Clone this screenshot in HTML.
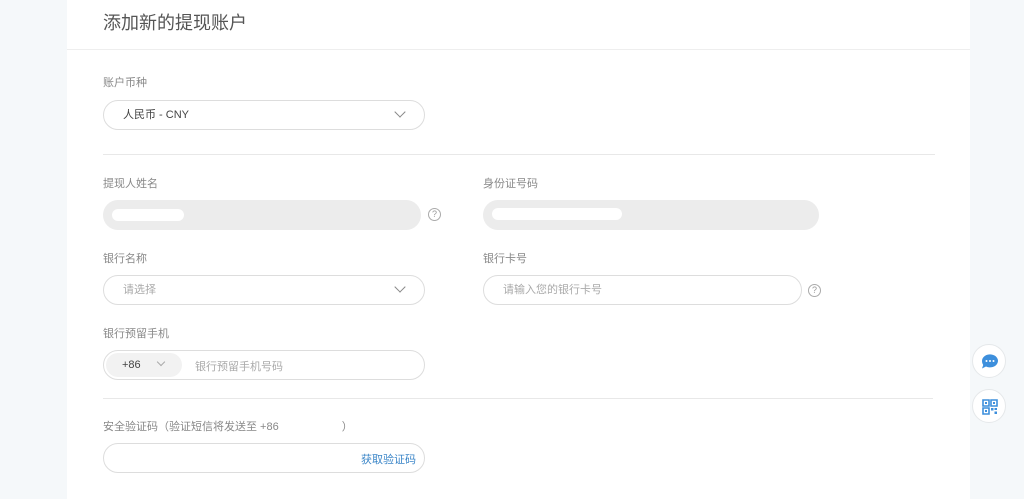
<!DOCTYPE html><html><head><meta charset="utf-8"><style>
*{margin:0;padding:0;box-sizing:border-box}
body{width:1024px;height:499px;background:#f5f8fa;font-family:"Liberation Sans","Noto Sans CJK SC",sans-serif;position:relative;overflow:hidden;color:#333}
.card{position:absolute;left:67px;top:0;width:903px;height:499px;background:#fff}
.a{position:absolute}
.t{font-size:18px;color:#555;left:103px;top:9px}
.lab{font-size:11px;color:#888}
.box{border:1px solid #ddd;border-radius:15px;height:30px;background:#fff;font-size:11px;line-height:28px}
.g{background:#ececec;border:none;border-radius:15px;height:30px}
.q{width:13px;height:13px;border:1px solid #aaa;border-radius:50%;font-size:9px;color:#999;text-align:center;line-height:11px}
.ph{color:#aaa}
.chev{position:absolute;right:20px;top:7px;width:8px;height:8px;border-right:1.3px solid #888;border-bottom:1.3px solid #888;transform:rotate(45deg)}
.hl{height:1px;background:#e8e8e8}
.btn{width:34px;height:34px;border-radius:50%;background:#fff;border:1px solid #e5e8ea;left:972px}
</style></head><body>
<div class="card"></div>
<div class="a t">添加新的提现账户</div>
<div class="a hl" style="left:67px;top:49px;width:903px;background:#eee"></div>
<div class="a lab" style="left:103px;top:74px">账户币种</div>
<div class="a box" style="left:103px;top:100px;width:322px;padding-left:19px;color:#444">人民币 - CNY<span class="chev"></span></div>
<div class="a hl" style="left:103px;top:154px;width:832px"></div>
<div class="a lab" style="left:103px;top:175px">提现人姓名</div>
<div class="a lab" style="left:483px;top:175px">身份证号码</div>
<div class="a g" style="left:103px;top:200px;width:318px"></div>
<div class="a" style="left:112px;top:209px;width:72px;height:12px;background:#fff;border-radius:6px"></div>
<div class="a q" style="left:428px;top:208px">?</div>
<div class="a g" style="left:483px;top:200px;width:336px"></div>
<div class="a" style="left:492px;top:208px;width:130px;height:12px;background:#fff;border-radius:6px"></div>
<div class="a lab" style="left:103px;top:250px">银行名称</div>
<div class="a lab" style="left:483px;top:250px">银行卡号</div>
<div class="a box ph" style="left:103px;top:275px;width:322px;padding-left:19px">请选择<span class="chev"></span></div>
<div class="a box ph" style="left:483px;top:275px;width:319px;padding-left:19px">请输入您的银行卡号</div>
<div class="a q" style="left:808px;top:284px">?</div>
<div class="a lab" style="left:103px;top:325px">银行预留手机</div>
<div class="a box" style="left:103px;top:350px;width:322px"></div>
<div class="a" style="left:106px;top:353px;width:76px;height:24px;background:#f2f2f2;border-radius:12px;font-size:11px;line-height:24px;padding-left:16px;color:#444">+86<span class="chev" style="right:18px;top:6px;width:6px;height:6px;border-color:#aaa"></span></div>
<div class="a ph" style="left:195px;top:358px;font-size:11px">银行预留手机号码</div>
<div class="a hl" style="left:103px;top:398px;width:830px"></div>
<div class="a lab" style="left:103px;top:418px">安全验证码（验证短信将发送至 +86 <span style="display:inline-block;width:60px"></span>）</div>
<div class="a box" style="left:103px;top:443px;width:322px"></div>
<div class="a" style="left:361px;top:451px;font-size:11px;color:#3b86c8">获取验证码</div>
<div class="a btn" style="top:344px"><svg width="34" height="34" viewBox="0 0 34 34"><path d="M9 16a8 6.5 0 1 1 4 5.5l-4 2 1.2-3.5A6.5 6.5 0 0 1 9 16z" fill="#3d8fdc"/><circle cx="13.5" cy="16" r="1" fill="#fff"/><circle cx="17" cy="16" r="1" fill="#fff"/><circle cx="20.5" cy="16" r="1" fill="#fff"/></svg></div>
<div class="a btn" style="top:389px"><svg width="34" height="34" viewBox="0 0 34 34" fill="#3d8fdc"><path d="M10 10h6v6h-6zM18 10h6v6h-6zM10 18h6v6h-6z" fill="none" stroke="#3d8fdc" stroke-width="1.6"/><rect x="12" y="12" width="2" height="2"/><rect x="20" y="12" width="2" height="2"/><rect x="12" y="20" width="2" height="2"/><rect x="18" y="18" width="2.5" height="2.5"/><rect x="21.5" y="21.5" width="2.5" height="2.5"/><rect x="21.5" y="18" width="2.5" height="2"/></svg></div>
</body></html>
